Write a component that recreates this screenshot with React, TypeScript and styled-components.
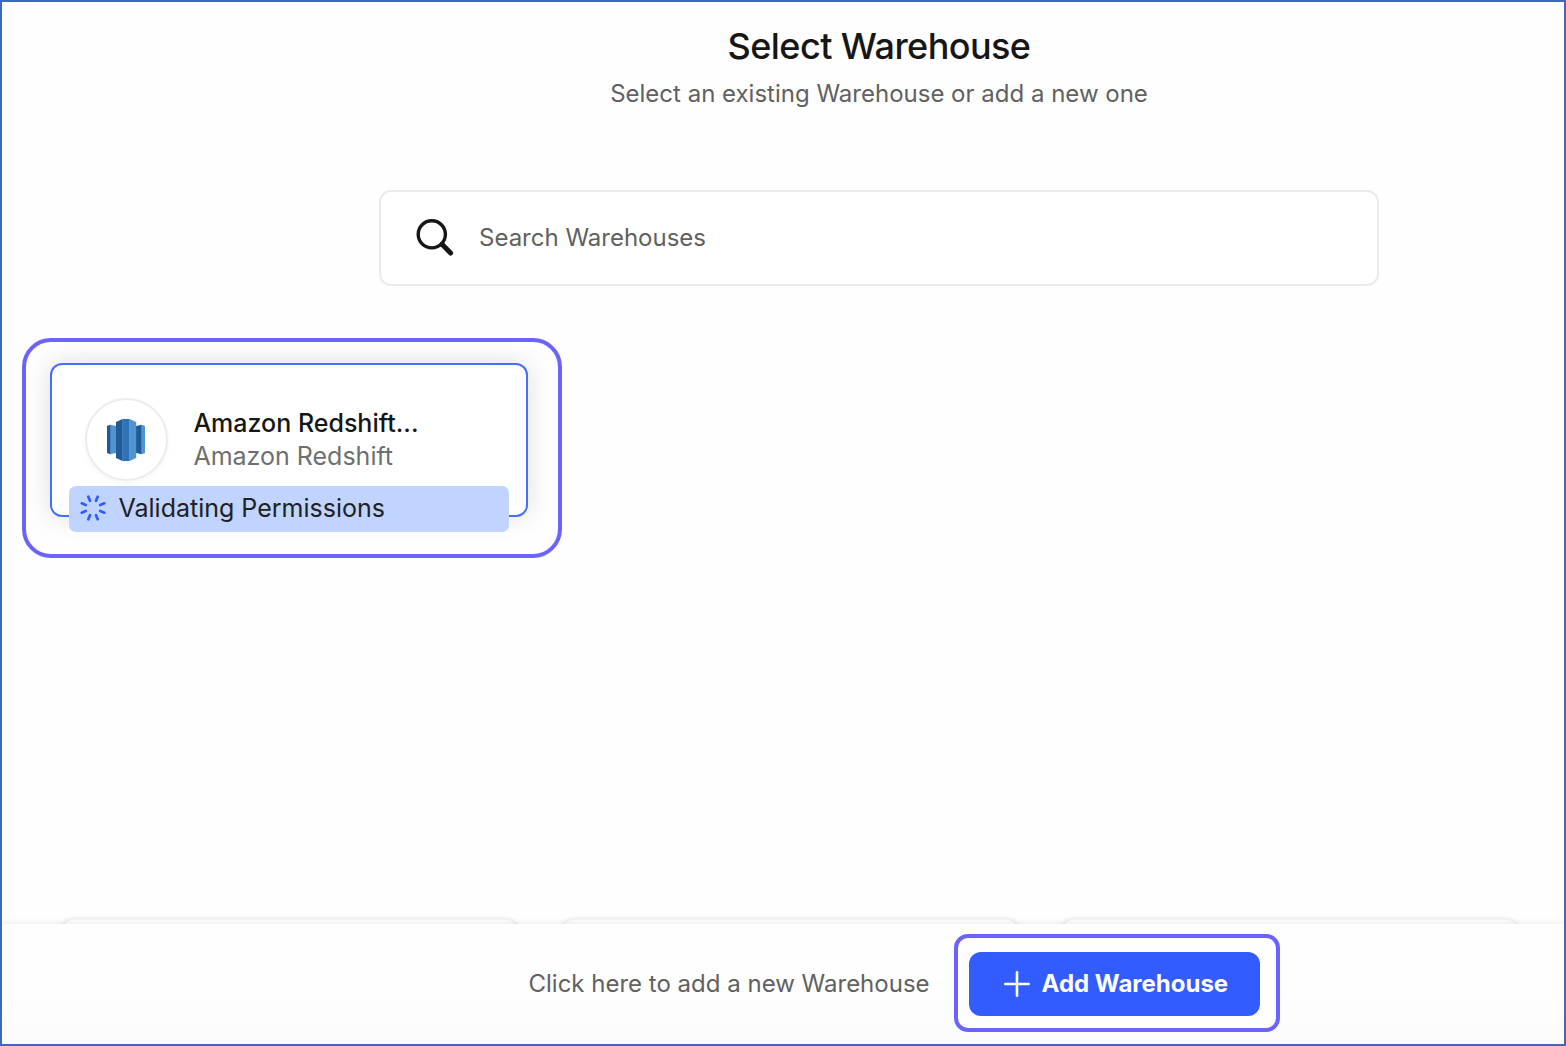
import React from "react";
import styled, { createGlobalStyle } from "styled-components";

const GlobalStyle = createGlobalStyle`
  * { box-sizing: border-box; }
  body { margin: 0; background: #fefefe; font-family: Inter, "Liberation Sans", sans-serif; }
`;

const Frame = styled.main`
  width: 1566px;
  height: 1046px;
  border: 2px solid #3a6ac2;
  background: #fefefe;
  display: flex;
  flex-direction: column;
  overflow: hidden;
`;

const Top = styled.header`
  display: flex;
  flex-direction: column;
  align-items: center;
  padding: 20px 0 0 192px;
`;

const Title = styled.h1`
  margin: 0;
  font-size: 36px;
  line-height: 48px;
  font-weight: 500;
  letter-spacing: -0.56px;
  color: #161616;
`;

const Muted = styled.p`
  margin: 0;
  font-size: 24px;
  line-height: 32px;
  letter-spacing: 0;
  color: #616161;
  white-space: nowrap;
`;

const Subtitle = styled(Muted)`
  margin-top: 8px;
`;

const SearchBox = styled.label`
  display: flex;
  align-items: center;
  gap: 24px;
  width: 1000px;
  height: 96px;
  margin-top: 80px;
  padding-left: 34px;
  border: 2px solid #ebebeb;
  border-radius: 12px;
  background: #fff;
`;

const Body = styled.section`
  flex: 1;
  min-height: 0;
  display: flex;
  flex-direction: column;
  justify-content: space-between;
  padding: 52px 0 0 20px;
  overflow: hidden;
`;

const CardHighlight = styled.div`
  width: 540px;
  height: 220px;
  border: 4px solid #6c63ff;
  border-radius: 29px;
  padding: 21px 0 0 23.5px;
`;

const Card = styled.article`
  position: relative;
  width: 478.5px;
  height: 154px;
  border: 2px solid #4470fb;
  border-radius: 12px;
  background: #fff;
  box-shadow: 0 0 26px rgba(0, 0, 0, 0.13);
  display: flex;
  gap: 25.5px;
  padding: 33px 0 0 33.4px;
`;

const LogoCircle = styled.div`
  width: 83px;
  height: 83px;
  flex: none;
  border: 2px solid #ececec;
  border-radius: 50%;
  box-shadow: 0 2px 5px rgba(0, 0, 0, 0.04);
  display: flex;
  align-items: center;
  justify-content: center;
`;

const Names = styled.div`
  display: flex;
  flex-direction: column;
  padding-top: 9px;
`;

const Name = styled.div<{ $strong?: boolean }>`
  font-size: 25px;
  line-height: 33px;
  font-weight: ${(p) => (p.$strong ? 500 : 400)};
  letter-spacing: 0;
  color: ${(p) => (p.$strong ? "#161616" : "#6f6f6f")};
  white-space: nowrap;
`;

const Status = styled.div`
  position: absolute;
  left: 17px;
  bottom: -16.5px;
  width: 440.5px;
  height: 46px;
  border-radius: 7px;
  background: #c0d4ff;
  display: flex;
  align-items: center;
  gap: 11.5px;
  padding-left: 10.5px;
  font-size: 25px;
  line-height: 30px;
  padding-bottom: 1px;
  letter-spacing: 0;
  color: #202124;
`;

const Peek = styled.div`
  display: flex;
  gap: 40px;
  height: 7px;
  padding-left: 38px;
`;

const PeekCard = styled.div`
  width: 460px;
  height: 150px;
  flex: none;
  border: 3px solid #f3f3f3;
  border-radius: 14px;
  box-shadow: 0 0 5px rgba(0, 0, 0, 0.03);
`;

const Footer = styled.footer`
  height: 120px;
  flex: none;
  position: relative;
  display: flex;
  align-items: center;
  gap: 24px;
  padding: 0 0 2px 526.5px;
  background: linear-gradient(#fefefe 60%, #fbfbfb);
  box-shadow: 0 0 7px rgba(0, 0, 0, 0.1);
`;

const FooterText = styled(Muted)`
  padding-top: 2px;
`;

const ButtonHighlight = styled.div`
  width: 326px;
  height: 98px;
  border: 4px solid #6c63ff;
  border-radius: 14px;
  padding: 14px 0 0 11px;
  background: #fefefe;
`;

const AddButton = styled.button`
  width: 291px;
  height: 64px;
  border: 0;
  border-radius: 12px;
  padding: 0 0 0 35px;
  background: #335cff;
  color: #fff;
  display: flex;
  align-items: center;
  gap: 12px;
  font-family: inherit;
  font-size: 24px;
  font-weight: 700;
  line-height: 30px;
  letter-spacing: 0;
  white-space: nowrap;
`;

const SearchIcon = () => (
  <svg width="40" height="40" viewBox="0 0 40 40" fill="none" stroke="#161616">
    <circle cx="16.8" cy="16.3" r="13.6" strokeWidth="3.4" />
    <path d="M27 26.3 35.6 35" strokeWidth="5" strokeLinecap="round" />
  </svg>
);

const RedshiftLogo = () => (
  <svg width="38" height="42" viewBox="0 0 38 42">
    <path d="M3 5.7 9.4 7V34L3 35.3z" fill="#5294cf" />
    <path d="M0 7 3.3 5.7V35.3L0 34z" fill="#205b99" />
    <path d="M29 7 34.8 5.7V35.3L29 34z" fill="#205b99" />
    <path d="M34.7 5.7 38 7V34L34.7 35.3z" fill="#5294cf" />
    <path d="M15.3 0H22.7V42H15.3z" fill="#2e73b8" />
    <path d="M9 3 15.5 0V42L9 39z" fill="#205b99" />
    <path d="M22.5 0 29.2 3V39L22.5 42z" fill="#5294cf" />
  </svg>
);

const Spinner = () => (
  <svg width="28" height="28" viewBox="-14 -14 28 28" stroke="#335cff" strokeWidth="2.8" strokeLinecap="round">
    {Array.from({ length: 8 }, (_, i) => (
      <path key={i} d="M0-7.8V-12.2" transform={`rotate(${22.5 + i * 45})`} />
    ))}
  </svg>
);

const PlusIcon = () => (
  <svg width="26" height="26" viewBox="0 0 26 26" stroke="#fff" strokeWidth="2.6" strokeLinecap="round">
    <path d="M13 1.3V24.7M1.3 13H24.7" />
  </svg>
);

export default function App() {
  return (
    <>
      <GlobalStyle />
      <Frame>
        <Top>
          <Title>Select Warehouse</Title>
          <Subtitle>Select an existing Warehouse or add a new one</Subtitle>
          <SearchBox>
            <SearchIcon />
            <Muted>Search Warehouses</Muted>
          </SearchBox>
        </Top>
        <Body>
          <CardHighlight>
            <Card>
              <LogoCircle>
                <RedshiftLogo />
              </LogoCircle>
              <Names>
                <Name $strong>Amazon Redshift...</Name>
                <Name>Amazon Redshift</Name>
              </Names>
              <Status>
                <Spinner />
                <span>Validating Permissions</span>
              </Status>
            </Card>
          </CardHighlight>
          <Peek>
            <PeekCard />
            <PeekCard />
            <PeekCard />
          </Peek>
        </Body>
        <Footer>
          <FooterText>Click here to add a new Warehouse</FooterText>
          <ButtonHighlight>
            <AddButton type="button">
              <PlusIcon />
              <span>Add Warehouse</span>
            </AddButton>
          </ButtonHighlight>
        </Footer>
      </Frame>
    </>
  );
}
